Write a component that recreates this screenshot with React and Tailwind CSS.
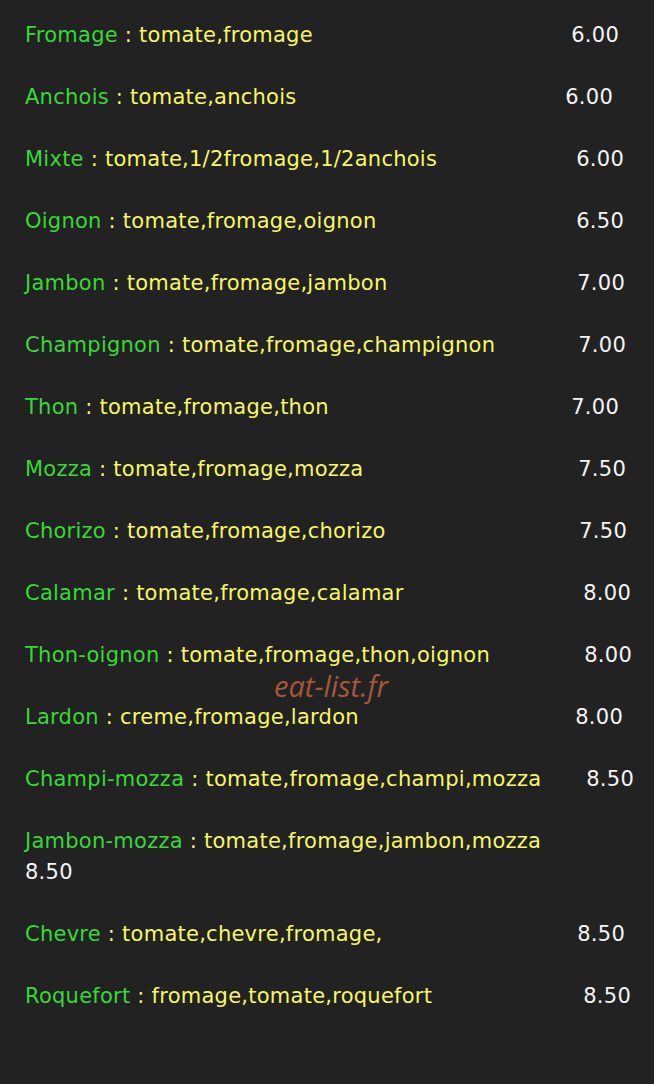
const pizzas = [
  { name: 'Fromage', desc: 'tomate,fromage', price: '6.00', mr: 'mr-[35px]' },
  { name: 'Anchois', desc: 'tomate,anchois', price: '6.00', mr: 'mr-[41px]' },
  { name: 'Mixte', desc: 'tomate,1/2fromage,1/2anchois', price: '6.00', mr: 'mr-[30px]' },
  { name: 'Oignon', desc: 'tomate,fromage,oignon', price: '6.50', mr: 'mr-[30px]' },
  { name: 'Jambon', desc: 'tomate,fromage,jambon', price: '7.00', mr: 'mr-[29px]' },
  { name: 'Champignon', desc: 'tomate,fromage,champignon', price: '7.00', mr: 'mr-[28px]' },
  { name: 'Thon', desc: 'tomate,fromage,thon', price: '7.00', mr: 'mr-[35px]' },
  { name: 'Mozza', desc: 'tomate,fromage,mozza', price: '7.50', mr: 'mr-[28px]' },
  { name: 'Chorizo', desc: 'tomate,fromage,chorizo', price: '7.50', mr: 'mr-[27px]' },
  { name: 'Calamar', desc: 'tomate,fromage,calamar', price: '8.00', mr: 'mr-[23px]' },
  { name: 'Thon-oignon', desc: 'tomate,fromage,thon,oignon', price: '8.00', mr: 'mr-[22px]' },
  { name: 'Lardon', desc: 'creme,fromage,lardon', price: '8.00', mr: 'mr-[31px]' },
  { name: 'Champi-mozza', desc: 'tomate,fromage,champi,mozza', price: '8.50', mr: 'mr-[20px]' },
  { name: 'Jambon-mozza', desc: 'tomate,fromage,jambon,mozza', price: '8.50', wrap: true },
  { name: 'Chevre', desc: 'tomate,chevre,fromage,', price: '8.50', mr: 'mr-[29px]' },
  { name: 'Roquefort', desc: 'fromage,tomate,roquefort', price: '8.50', mr: 'mr-[23px]' },
]

function Row({ item }) {
  const label = (
    <span>
      <span className="text-[#36d936]">{item.name}</span>
      <span className="text-[#f7f764]"> : {item.desc}</span>
    </span>
  )

  if (item.wrap) {
    return (
      <div className="mb-[31px]">
        <div>{label}</div>
        <div className="text-[#f4f4f4]">{item.price}</div>
      </div>
    )
  }

  return (
    <div className="flex justify-between mb-[31px]">
      {label}
      <span className={`text-[#f4f4f4] ${item.mr}`}>{item.price}</span>
    </div>
  )
}

export default function App() {
  return (
    <div className="relative min-h-[1084px] w-[654px] bg-[#222222] pl-[25px] pt-[20px] text-[21px] tracking-[0.25px] leading-[31px] font-['DejaVu_Sans',Verdana,sans-serif]">
      {pizzas.map((p) => (
        <Row key={p.name} item={p} />
      ))}

      {/* watermark */}
      <span className="absolute left-[274px] top-[671px] text-[29px] italic leading-none tracking-normal text-[#a3573c] font-['Open_Sans',sans-serif]">
        eat-list.fr
      </span>
    </div>
  )
}
